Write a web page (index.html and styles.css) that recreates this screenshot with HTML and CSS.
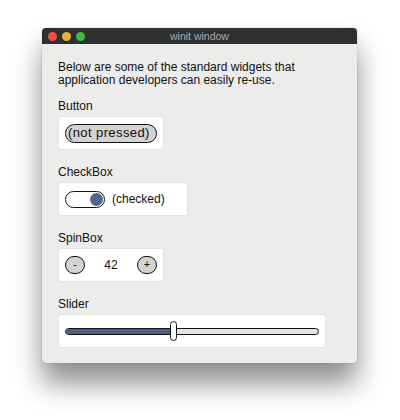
FILE: index.html
```html
<!DOCTYPE html>
<html>
<head>
<meta charset="utf-8">
<link rel="stylesheet" href="styles.css">
</head>
<body>
<div class="window">
  <div class="titlebar">
    <div class="lights">
      <span class="light red"></span>
      <span class="light yellow"></span>
      <span class="light green"></span>
    </div>
    <div class="title">winit window</div>
  </div>
  <div class="content">
    <p class="intro">Below are some of the standard widgets that<br>application developers can easily re-use.</p>

    <div class="group">
      <div class="label">Button</div>
      <div class="box box-button">
        <div class="pill">(not pressed)</div>
      </div>
    </div>

    <div class="group">
      <div class="label">CheckBox</div>
      <div class="box box-check">
        <div class="toggle"><span class="knob"></span></div>
        <span class="text">(checked)</span>
      </div>
    </div>

    <div class="group">
      <div class="label">SpinBox</div>
      <div class="box box-spin">
        <div class="spin-btn">-</div>
        <span class="value">42</span>
        <div class="spin-btn">+</div>
      </div>
    </div>

    <div class="group">
      <div class="label">Slider</div>
      <div class="box box-slider">
        <div class="track">
          <div class="fill" style="width: 42.5%"></div>
          <div class="thumb" style="left: 42.5%"></div>
        </div>
      </div>
    </div>
  </div>
</div>
</body>
</html>
```

FILE: styles.css
```css
html, body {
  margin: 0;
  padding: 0;
  background: #ffffff;
}
body {
  font-family: "Liberation Sans", Arial, sans-serif;
  font-size: 12px;
  color: #111;
  padding: 28px 0 0 42px;
  height: 420px;
  box-sizing: border-box;
  overflow: hidden;
}
.window {
  width: 315px;
  height: 335px;
  border-radius: 4px;
  overflow: hidden;
  background: #ececeb;
  box-shadow: 0 20px 28px rgba(0, 0, 0, 0.45), 0 0 1px rgba(0, 0, 0, 0.5);
  display: flex;
  flex-direction: column;
}
.titlebar {
  height: 16px;
  background: #2e2f31;
  position: relative;
  display: flex;
  align-items: center;
  justify-content: center;
}
.lights {
  position: absolute;
  left: 6px;
  top: 4px;
  display: flex;
  gap: 5px;
}
.light {
  width: 9px;
  height: 9px;
  border-radius: 50%;
  display: block;
}
.red { background: #f0504a; }
.yellow { background: #e8b434; }
.green { background: #3ebb41; }
.title {
  color: #ababab;
  font-size: 10.5px;
  line-height: 16px;
}
.content {
  flex: 1;
  padding: 17px 16px 0 16px;
  display: flex;
  flex-direction: column;
  gap: 16px;
}
.intro {
  margin: 0 0 -3px 0;
  line-height: 13px;
}
.group {
  display: flex;
  flex-direction: column;
  gap: 4px;
}
.label {
  line-height: 12px;
}
.box {
  background: #ffffff;
  border: 1px solid #e2e2e2;
  border-radius: 3px;
  height: 34px;
  box-sizing: border-box;
  display: flex;
  align-items: center;
  padding: 0 6px;
}
.box-button { width: 106px; }
.box-check { width: 130px; gap: 7px; }
.box-spin { width: 106px; justify-content: space-between; }
.box-slider { width: 268px; }

.pill {
  width: 92px;
  height: 19px;
  box-sizing: border-box;
  border: 1.5px solid #111;
  border-radius: 10px;
  background: #d3d3d3;
  font-size: 13px;
  letter-spacing: 0.4px;
  line-height: 16px;
  padding-left: 2px;
  white-space: nowrap;
}
.toggle {
  width: 40px;
  height: 17px;
  box-sizing: border-box;
  border: 1.5px solid #111;
  border-radius: 9px;
  background: #fff;
  display: flex;
  align-items: center;
  justify-content: flex-end;
  padding-right: 1px;
}
.knob {
  width: 13px;
  height: 13px;
  border-radius: 50%;
  background: #51658a;
  display: block;
}
.spin-btn {
  width: 20px;
  height: 18px;
  box-sizing: border-box;
  border: 1.5px solid #111;
  border-radius: 9px;
  background: #d3d3d3;
  font-size: 11px;
  line-height: 15px;
  text-align: center;
}
.value {
  font-size: 12px;
}
.track {
  position: relative;
  width: 254px;
  height: 7px;
  box-sizing: border-box;
  border: 1.5px solid #111;
  border-radius: 4px;
  background: #e4e4e4;
}
.fill {
  height: 100%;
  background: #4d5e7e;
  border-radius: 3px 0 0 3px;
}
.thumb {
  position: absolute;
  top: -8px;
  width: 7px;
  height: 20px;
  margin-left: -3px;
  box-sizing: border-box;
  border: 1.5px solid #111;
  border-radius: 4px;
  background: #fff;
}
```
